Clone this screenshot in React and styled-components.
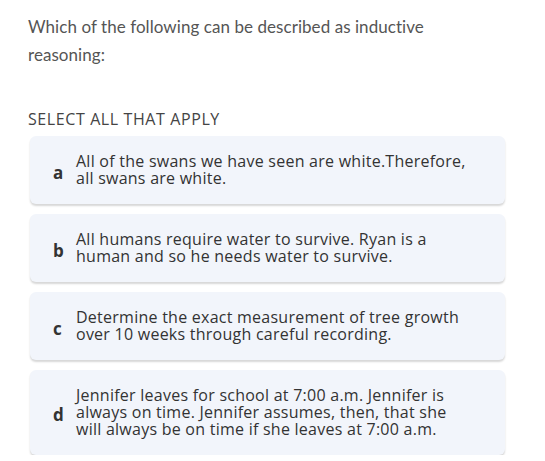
import React from "react";
import styled, { createGlobalStyle } from "styled-components";

const options = [
  {
    id: "a",
    text: "All of the swans we have seen are white.Therefore, all swans are white.",
  },
  {
    id: "b",
    text: "All humans require water to survive. Ryan is a human and so he needs water to survive.",
  },
  {
    id: "c",
    text: "Determine the exact measurement of tree growth over 10 weeks through careful recording.",
  },
  {
    id: "d",
    text: "Jennifer leaves for school at 7:00 a.m. Jennifer is always on time. Jennifer assumes, then, that she will always be on time if she leaves at 7:00 a.m.",
  },
];

const GlobalStyle = createGlobalStyle`
  body {
    margin: 0;
    background: #ffffff;
    font-family: "Open Sans", "Lato", sans-serif;
  }
`;

const App = () => {
  return (
    <Page>
      <GlobalStyle />
      <Question>
        Which of the following can be described as inductive reasoning:
      </Question>
      <Instruction>SELECT ALL THAT APPLY</Instruction>
      <OptionList>
        {options.map(({ id, text }) => (
          <Option key={id}>
            <Letter>{id}</Letter>
            <OptionText>{text}</OptionText>
          </Option>
        ))}
      </OptionList>
    </Page>
  );
};

const Page = styled.div`
  padding: 13px 20px 0 28px;
`;

const Question = styled.p`
  margin: 0;
  width: 420px;
  color: #555555;
  font-family: "Lato", sans-serif;
  font-size: 17px;
  letter-spacing: 0.06px;
  line-height: 28px;
`;

const Instruction = styled.p`
  margin: 40px 0 0;
  color: #444444;
  font-size: 16px;
  letter-spacing: 0.6px;
  line-height: 20px;
`;

const OptionList = styled.div`
  display: flex;
  flex-direction: column;
  gap: 10px;
  margin: 7px 20px 0 2px;
`;

const Option = styled.div`
  display: flex;
  align-items: center;
  gap: 12px;
  padding: 17px 20px 17px 23px;
  background: #f2f5fb;
  border-radius: 6px;
  box-shadow: 0 2px 2px rgba(0, 0, 0, 0.16);
`;

const Letter = styled.span`
  width: 11px;
  margin-top: 4px;
  color: #333333;
  font-size: 17px;
  font-weight: 700;
`;

const OptionText = styled.span`
  flex: 1;
  max-width: 394px;
  color: #333333;
  font-size: 16px;
  letter-spacing: 0.25px;
  line-height: 17px;
`;

export default App;
